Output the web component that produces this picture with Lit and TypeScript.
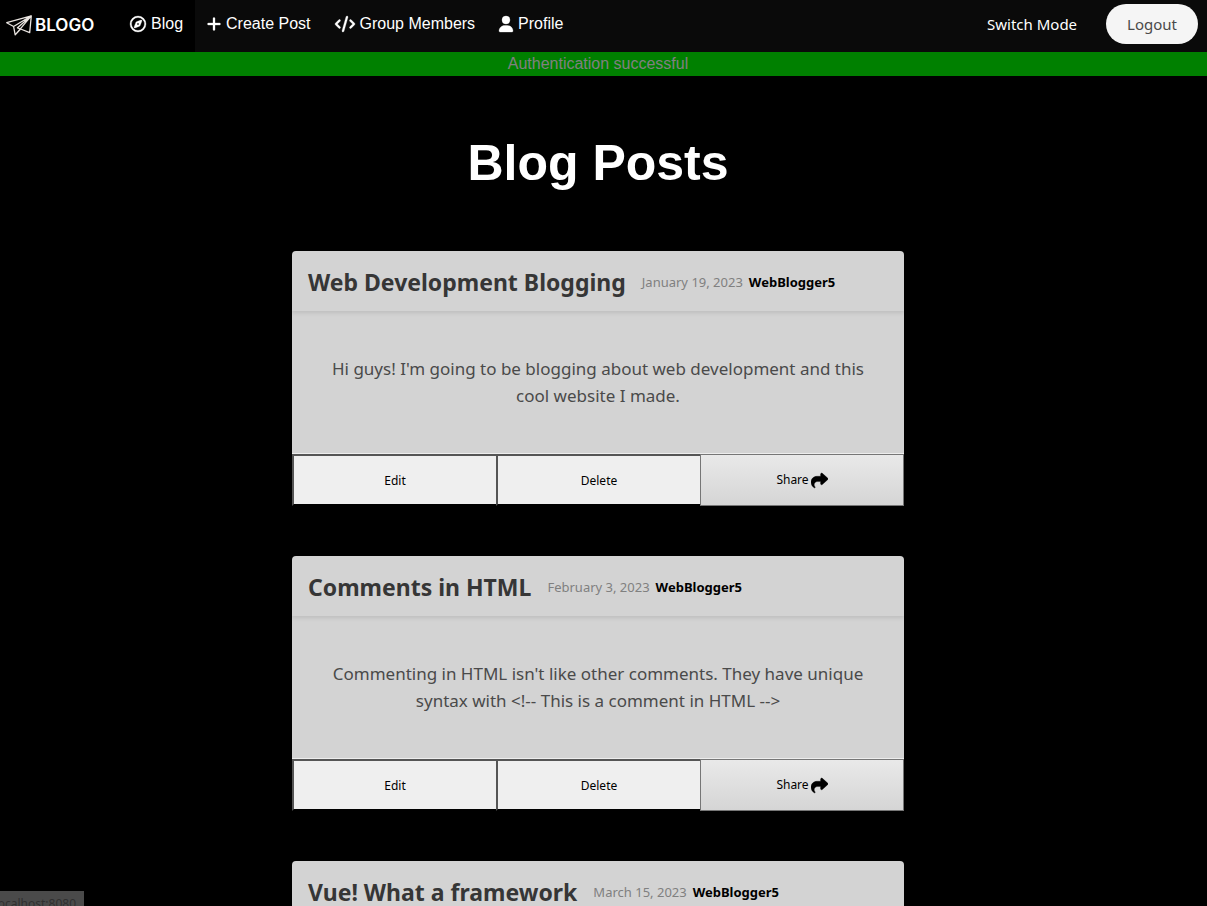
import { LitElement, html, css, svg, nothing } from "lit";
import { customElement, property } from "lit/decorators.js";

interface Glyph {
  width: number;
  path: string;
}

const glyphs: Record<string, Glyph> = {
  compass: {
    width: 512,
    path: "M464 256A208 208 0 1 0 48 256a208 208 0 1 0 416 0zM0 256a256 256 0 1 1 512 0A256 256 0 1 1 0 256zm306.7 69.1L162.4 380.6c-19.4 7.5-38.5-11.6-31-31l55.5-144.3c3.3-8.5 9.9-15.1 18.4-18.4l144.3-55.5c19.4-7.5 38.5 11.6 31 31L325.1 306.7c-3.2 8.5-9.9 15.1-18.4 18.4zM288 256a32 32 0 1 0 -64 0 32 32 0 1 0 64 0z",
  },
  plus: {
    width: 448,
    path: "M256 80c0-17.7-14.3-32-32-32s-32 14.3-32 32V224H48c-17.7 0-32 14.3-32 32s14.3 32 32 32H192V432c0 17.7 14.3 32 32 32s32-14.3 32-32V288H400c17.7 0 32-14.3 32-32s-14.3-32-32-32H256V80z",
  },
  code: {
    width: 640,
    path: "M392.8 1.2c-17-4.9-34.7 5-39.6 22l-128 448c-4.9 17 5 34.7 22 39.6s34.7-5 39.6-22l128-448c4.9-17-5-34.7-22-39.6zm80.6 120.1c-12.5 12.5-12.5 32.8 0 45.3L562.7 256l-89.4 89.4c-12.5 12.5-12.5 32.8 0 45.3s32.8 12.5 45.3 0l112-112c12.5-12.5 12.5-32.8 0-45.3l-112-112c-12.5-12.5-32.8-12.5-45.3 0zm-306.7 0c-12.5-12.5-32.8-12.5-45.3 0l-112 112c-12.5 12.5-12.5 32.8 0 45.3l112 112c12.5 12.5 32.8 12.5 45.3 0s12.5-32.8 0-45.3L77.3 256l89.4-89.4c12.5-12.5 12.5-32.8 0-45.3z",
  },
  user: {
    width: 448,
    path: "M224 256A128 128 0 1 0 224 0a128 128 0 1 0 0 256zm-45.7 48C79.8 304 0 383.8 0 482.3C0 498.7 13.3 512 29.7 512H418.3c16.4 0 29.7-13.3 29.7-29.7C448 383.8 368.2 304 269.7 304H178.3z",
  },
  share: {
    width: 512,
    path: "M307 34.8c-11.5 5.1-19 16.6-19 29.2v64H176C78.8 128 0 206.8 0 304C0 417.3 81.5 467.9 100.2 478.1c2.5 1.4 5.3 1.9 8.1 1.9c10.9 0 19.7-8.9 19.7-19.7c0-7.5-4.3-14.4-9.8-19.5C108.8 431.9 96 414.4 96 384c0-53 43-96 96-96h96v64c0 12.6 7.4 24.1 19 29.2s25 3 34.4-5.4l160-144c6.7-6.1 10.6-14.7 10.6-23.8s-3.8-17.7-10.6-23.8l-160-144c-9.4-8.5-22.9-10.6-34.4-5.4z",
  },
};

function icon(name: string) {
  const g = glyphs[name];
  return html`<svg class="icon" viewBox="0 0 ${g.width} 512" aria-hidden="true">
    ${svg`<path d=${g.path} fill="currentColor" stroke="currentColor" stroke-width="10"></path>`}
  </svg>`;
}

interface Post {
  title: string;
  date: string;
  author: string;
  body?: string;
}

const posts: Post[] = [
  {
    title: "Web Development Blogging",
    date: "January 19, 2023",
    author: "WebBlogger5",
    body: "Hi guys! I'm going to be blogging about web development and this cool website I made.",
  },
  {
    title: "Comments in HTML",
    date: "February 3, 2023",
    author: "WebBlogger5",
    body: "Commenting in HTML isn't like other comments. They have unique syntax with <!-- This is a comment in HTML -->",
  },
  { title: "Vue! What a framework", date: "March 15, 2023", author: "WebBlogger5" },
];

@customElement("nav-bar")
export class NavBar extends LitElement {
  static styles = css`
    :host {
      display: block;
    }
    .bar {
      display: flex;
      align-items: stretch;
      height: 52px;
      background: #0a0a0a;
      color: #fff;
    }
    a {
      color: inherit;
      text-decoration: none;
    }
    .brand {
      display: flex;
      align-items: center;
      gap: 3px;
      padding: 0 19px 2px 6px;
      background: #000;
      font: 600 17px/24px Inter, "Open Sans", sans-serif;
    }
    .mark {
      width: 26px;
      height: 21px;
      stroke: #e9e4e0;
      stroke-width: 1.3;
    }
    .wordmark {
      min-width: 64px;
    }
    .item {
      display: flex;
      align-items: center;
      gap: 5px;
      padding: 0 12px 5px;
      font: 16px/24px "Liberation Sans", Arial, sans-serif;
    }
    .active {
      background: #000;
    }
    .icon {
      height: 16px;
      overflow: visible;
    }
    .end {
      display: flex;
      align-items: center;
      gap: 29px;
      margin-left: auto;
      padding: 0 9px 4px 0;
      font: 15px/24px "Noto Sans", "Segoe UI", sans-serif;
    }
    .logout {
      height: 40px;
      padding: 0 21px;
      border: 0;
      border-radius: 20px;
      background: #f5f5f5;
      color: #4a4a4a;
      font: inherit;
    }
    .switch {
      padding: 0;
      border: 0;
      background: none;
      color: inherit;
      font: inherit;
    }
  `;

  render() {
    return html`
      <nav class="bar" aria-label="Main">
        <a class="brand" href="#">
          <svg class="mark" viewBox="0 0 26 21" fill="none" stroke-linejoin="round" aria-hidden="true">
            <path d="M.7 7.7 25.3.8 23.7 17.6 14.6 14 9.2 19.8 7.6 11.5Z M25.3.8 7.6 11.5 M25.3.8 9.2 19.8 M25.3.8 11.5 12.8 14.6 14"></path>
          </svg>
          <span class="wordmark">BLOGO</span>
        </a>
        <a class="item active" href="#">${icon("compass")}<span>Blog</span></a>
        <a class="item" href="#">${icon("plus")}<span>Create Post</span></a>
        <a class="item" href="#">${icon("code")}<span>Group Members</span></a>
        <a class="item" href="#">${icon("user")}<span>Profile</span></a>
        <div class="end">
          <button class="switch" type="button">Switch Mode</button>
          <button class="logout" type="button">Logout</button>
        </div>
      </nav>
    `;
  }
}

@customElement("post-card")
export class PostCard extends LitElement {
  @property({ attribute: false }) post!: Post;

  static styles = css`
    :host {
      display: block;
      font-family: "Noto Sans", "Segoe UI", sans-serif;
    }
    .card {
      border-radius: 4px 4px 0 0;
      background: #d3d3d3;
    }
    .head {
      display: flex;
      align-items: center;
      gap: 16px;
      height: 60px;
      padding: 2px 16px 0;
      box-sizing: border-box;
      box-shadow: 0 2px 4px rgba(10, 10, 10, 0.1);
    }
    .title {
      margin: 0;
      color: #363636;
      font-size: 23px;
      font-weight: 700;
      line-height: 36px;
    }
    .meta {
      display: flex;
      gap: 6px;
      margin: 0;
      color: #808080;
      font-size: 13px;
      line-height: 20px;
    }
    .author {
      color: #000;
      font-weight: 700;
    }
    .body {
      margin: 0;
      padding: 44px 36px;
      color: #4a4a4a;
      font-size: 17px;
      line-height: 27px;
      text-align: center;
    }
    .actions {
      display: grid;
      grid-template-columns: repeat(3, 1fr);
      border-top: 1px solid #ededed;
    }
    .action {
      display: flex;
      align-items: center;
      justify-content: center;
      gap: 2px;
      height: 52px;
      padding: 2px 0 0;
      border: 2px solid;
      border-color: #555 #000 #000 #555;
      border-right-width: 0;
      border-radius: 0;
      background: #efefef;
      color: #000;
      font: 12px/20px "Noto Sans", "Segoe UI", sans-serif;
    }
    .share {
      padding: 0;
      border: 1px solid #767676;
      background: linear-gradient(#e9e9e9, #d5d5d5);
    }
    .icon {
      height: 17px;
    }
  `;

  render() {
    const { title, date, author, body } = this.post;
    return html`
      <article class="card">
        <header class="head">
          <h2 class="title">${title}</h2>
          <p class="meta"><time>${date}</time><strong class="author">${author}</strong></p>
        </header>
        ${body
          ? html`
              <p class="body">${body}</p>
              <footer class="actions">
                <button class="action" type="button">Edit</button>
                <button class="action" type="button">Delete</button>
                <button class="action share" type="button">Share ${icon("share")}</button>
              </footer>
            `
          : nothing}
      </article>
    `;
  }
}

@customElement("app-root")
export class AppRoot extends LitElement {
  static styles = css`
    :host {
      display: block;
      height: 100vh;
      overflow: hidden;
      background: #000;
    }
    .notice {
      margin: 0;
      padding-right: 11px;
      background: #008000;
      color: #808080;
      font: 16px/24px "Liberation Sans", Arial, sans-serif;
      text-align: center;
    }
    .page {
      padding: 57px 11px 0 0;
    }
    .heading {
      margin: 0;
      color: #fff;
      font: 700 50px/60px "Liberation Sans", Arial, sans-serif;
      text-align: center;
    }
    .feed {
      display: grid;
      gap: 50px;
      width: 100%;
      max-width: 612px;
      margin: 58px auto 0;
    }
    .status {
      position: fixed;
      left: 0;
      bottom: 0;
      display: flex;
      justify-content: flex-end;
      width: 76px;
      height: 15px;
      padding-right: 8px;
      overflow: hidden;
      background: #4a4a4a;
      color: #303030;
      font: 12px/26px "Noto Sans", "Segoe UI", sans-serif;
    }
  `;

  render() {
    return html`
      <nav-bar></nav-bar>
      <p class="notice" role="status">Authentication successful</p>
      <main class="page">
        <h1 class="heading">Blog Posts</h1>
        <div class="feed">${posts.map((p) => html`<post-card .post=${p}></post-card>`)}</div>
      </main>
      <div class="status">localhost:8080</div>
    `;
  }
}
